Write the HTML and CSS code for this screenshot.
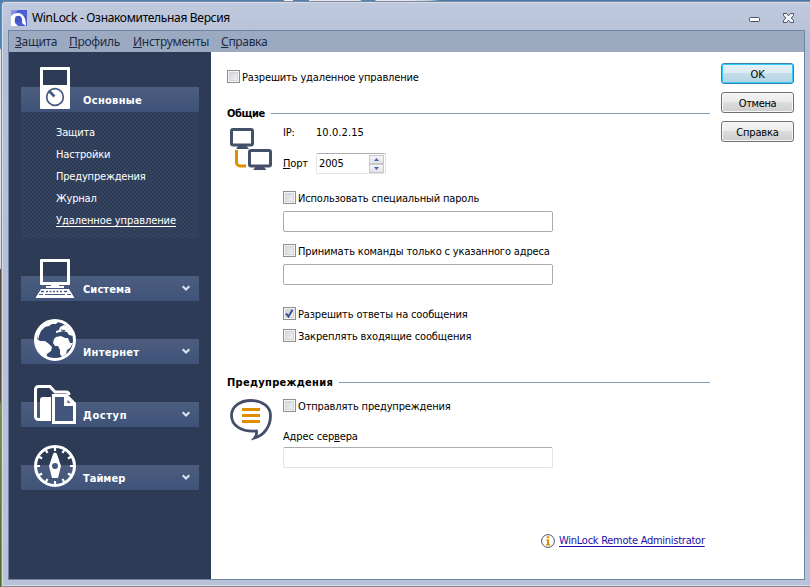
FILE: index.html
```html
<!DOCTYPE html>
<html lang="ru">
<head>
<meta charset="utf-8">
<title>WinLock</title>
<link rel="stylesheet" href="styles.css">
</head>
<body>
<div class="window">
  <header class="titlebar">
    <svg class="app-icon" width="16" height="16" viewBox="0 0 16 16">
      <rect width="16" height="16" fill="#4d5fd5"/>
      <path d="M0 0h7L0 7Z" fill="#8794e4"/>
      <path d="M0 6C2 4 4 3 7 3c5 0 8 5 8 13l-4-3c1-4-1-6-4-6-3 1-4 3-3 6l3 3H0Z" fill="#fff"/>
      <circle cx="7.300" cy="9" r="3.300" fill="#4256cb"/>
    </svg>
    <span class="caption">WinLock - Ознакомительная Версия</span>
    <svg class="win-btns" width="46" height="13" viewBox="0 0 46 13">
      <rect x=".5" y="6.500" width="10" height="4" rx="1" fill="#fff" stroke="#4a5163"/>
      <path d="M34.500 2.500h3l2 2.300 2-2.300h3v2L42.300 7l2.200 2.500v2h-3l-2-2.300-2 2.300h-3v-2L36.700 7l-2.200-2.500Z" fill="#f6f8fb" stroke="#4a5163"/>
    </svg>
  </header>
  <div class="client">
    <nav class="menu">
      <span class="m1"><u>З</u>ащита</span><span class="m2"><u>П</u>рофиль</span><span class="m3"><u>И</u>нструменты</span><span class="m4"><u>С</u>правка</span>
    </nav>
    <div class="body">
      <aside class="sidebar">
        <section class="group open">
          <h2 class="bar"><svg class="ico" style="top:-20px" width="42" height="42" viewBox="0 0 42 42">
            <path fill-rule="evenodd" d="M7 0h28a1 1 0 0 1 1 1v40a1 1 0 0 1-1 1H7a1 1 0 0 1-1-1V1a1 1 0 0 1 1-1ZM9 3v15h24V3Z" fill="#fff"/>
            <circle cx="21" cy="30" r="8.300" fill="none" stroke="#465a80" stroke-width="1.700"/><path d="m15 24 5.500 5.500" stroke="#465a80" stroke-width="2.600"/>
          </svg><span class="s1">Основные</span></h2>
          <ul class="items">
            <li>Защита</li><li>Настройки</li><li>Предупреждения</li><li>Журнал</li><li class="current">Удаленное управление</li>
          </ul>
        </section>
        <section class="group">
          <h2 class="bar"><svg class="ico" style="top:-17px" width="42" height="40" viewBox="0 0 42 40">
            <path fill-rule="evenodd" d="M7 0h28a1 1 0 0 1 1 1v24a1 1 0 0 1-1 1H7a1 1 0 0 1-1-1V1a1 1 0 0 1 1-1ZM9 3v20h24V3Z" fill="#fff"/>
            <path d="M17 25h8v2h5v2H12v-2h5ZM7 30h28l5.500 9h-39Z" fill="#fff"/>
            <path d="M7 32.500h3m2 0h2m1.500 0h2m1.500 0h2m1.500 0h2m1.500 0h2m2 0h3" stroke="#465a80" stroke-width="1.300"/><path d="M5 35.500h4m2 0h20m2 0h4" stroke="#465a80" stroke-width="1"/>
          </svg><span class="s2">Система</span><svg class="chev" width="8" height="7" viewBox="0 0 8 7"><path d="M.7 1.200 4 4.500l3.300-3.300" /></svg></h2>
        </section>
        <section class="group">
          <h2 class="bar"><svg class="ico" style="top:-20px" width="42" height="42" viewBox="0 0 42 42">
            <circle cx="21" cy="21" r="20" fill="#34476c"/>
            <circle cx="21" cy="21" r="19.500" fill="none" stroke="#fff" stroke-width="3"/>
            <path d="M3 16C5 8 10 3 17 2l7 1-2 2-4 0-3 2-4 1-4 4-2 5-1 4Z" fill="#fff"/>
            <path d="M3 20l3 2 5 0 4 3 3 3-1 4-4 3-1 4-5-3-4-8Z" fill="#fff"/>
            <path d="m22 12 3-1 1-3 4-2 3 1 4 5 2 5-4-1-2-3-4-1-3 1-4 1ZM20 20l2-2 5-1 4 2 3 0 2 5 3 0-3 5-3 2-1 4-4 3-2-3 0-4-2-4-3 0-2-3Z" fill="#fff"/>
            <path d="m27 11 4 .5" stroke="#34476c"/>
          </svg><span class="s3">Интернет</span><svg class="chev" width="8" height="7" viewBox="0 0 8 7"><path d="M.7 1.200 4 4.500l3.300-3.300" /></svg></h2>
        </section>
        <section class="group">
          <h2 class="bar"><svg class="ico" style="top:-17px" width="42" height="39" viewBox="0 0 42 39">
            <path d="M17 34.500H4.500a3 3 0 0 1-3-3v-27a3 3 0 0 1 3-3H16l5 5.500h11q3 0 3 3" fill="none" stroke="#fff" stroke-width="3"/>
            <path d="M9 12h8v24H5q1-1 1-4V15q0-3 3-3Z" fill="#fff"/>
            <path d="M17.500 8v30" stroke="#42567d"/>
            <path d="M19.500 10.500h13l8 8v19h-21ZM31.500 10v9.500H41" fill="#42567d" stroke="#fff" stroke-width="3"/><path d="M32 10v10h10Z" fill="#fff"/><path d="m33.500 15 3 3h-3Z" fill="#42567d"/>
          </svg><span class="s4">Доступ</span><svg class="chev" width="8" height="7" viewBox="0 0 8 7"><path d="M.7 1.200 4 4.500l3.300-3.300" /></svg></h2>
        </section>
        <section class="group">
          <h2 class="bar"><svg class="ico" style="top:-20px" width="42" height="42" viewBox="0 0 42 42">
            <circle cx="21" cy="21" r="19.500" fill="none" stroke="#fff" stroke-width="3"/>
            <path d="M21 2v4M21 36v4M2 21h4M36 21h4M11.500 4.500l2 3.500M28.500 34l2 3.500M4.500 11.500l3.500 2M34 28.500l3.500 2M30.500 4.500l-2 3.500M13.500 34l-2 3.500M37.500 11.500l-3.500 2M8 28.500l-3.500 2" stroke="#fff" stroke-width="2.200"/>
            <path d="M21 7.500q1.800 0 2.500 3L27 21l-3 12h-6l-3-12 3.500-10.500q.7-3 2.500-3Z" fill="#fff"/><circle cx="21" cy="21" r="3" fill="#465a80"/>
          </svg><span class="s5">Таймер</span><svg class="chev" width="8" height="7" viewBox="0 0 8 7"><path d="M.7 1.200 4 4.500l3.300-3.300" /></svg></h2>
        </section>
      </aside>
      <main class="form">
        <label class="check"><i class="box"></i><span>Разрешить удаленное управление</span></label>
        <div class="legend general"><span>Общие</span><i></i></div>
        <div class="section">
          <svg class="pic" width="44" height="44" viewBox="0 0 44 44">
            <path d="M7.500 23v12.500a3.500 3.500 0 0 0 3.500 3.500h6" fill="none" stroke="#e08e00" stroke-width="3"/>
            <rect x="2.500" y="2.500" width="21" height="15.500" rx="1.500" fill="#fff" stroke="#44506a" stroke-width="3"/><path d="M9.500 18.500h7.500l3 3.500H7Z" fill="#44506a"/>
            <rect x="20.500" y="23.500" width="21" height="15.500" rx="1.500" fill="#fff" stroke="#44506a" stroke-width="3"/><path d="M27 39.500h7.500l3 3.500H24Z" fill="#44506a"/>
          </svg>
          <div class="fields">
            <div class="row ip"><span class="name">IP:</span><span class="addr">10.0.2.15</span></div>
            <div class="row port"><span class="name"><u>П</u>орт</span>
              <div class="spin"><span>2005</span><div class="arrows">
                <i><svg width="5" height="3" viewBox="0 0 5 3"><path d="M0 3 2.500 0 5 3Z"/></svg></i><i><svg width="5" height="3" viewBox="0 0 5 3"><path d="M0 0h5L2.500 3Z"/></svg></i>
              </div></div>
            </div>
            <label class="check c1"><i class="box"></i><span>Использовать специальный пароль</span></label>
            <div class="input"></div>
            <label class="check c2"><i class="box"></i><span>Принимать команды только с указанного адреса</span></label>
            <div class="input"></div>
            <label class="check c3"><i class="box"><svg width="9" height="9" viewBox="0 0 9 9"><path d="m1 4.500 2.500 3L7.500.8" fill="none" stroke="#3d5492" stroke-width="2"/></svg></i><span>Разрешить ответы на сообщения</span></label>
            <label class="check c4"><i class="box"></i><span>Закреплять входящие сообщения</span></label>
          </div>
        </div>
        <div class="legend alerts"><span>Предупреждения</span><i></i></div>
        <div class="section second">
          <svg class="pic" width="44" height="44" viewBox="0 0 44 44">
            <path d="M22 2.500c11 0 19.500 6 19.500 15 0 11-6.500 20-16 22.500 2-2.500 2.500-4.500 2-7C12 34.500 2.500 27 2.500 17.500 2.500 8.500 11 2.500 22 2.500Z" fill="#fff" stroke="#44506a" stroke-width="2.800"/>
            <path d="M13 11.500h18M13 17.500h18M13 23.500h18" stroke="#e08e00" stroke-width="3"/>
          </svg>
          <div class="fields">
            <label class="check"><i class="box"></i><span>Отправлять предупреждения</span></label>
            <div class="server">Адрес сер<u>в</u>ера</div>
            <div class="input light"></div>
          </div>
        </div>
        <div class="linkrow">
          <svg width="14" height="14" viewBox="0 0 14 14"><circle cx="7" cy="7" r="6.400" fill="#fff" stroke="#44506a"/><path d="M5.800 2.300h2.400v2H5.800ZM5 5.500h3.200v4.700H9.300v1.300H5v-1.300h1V6.800H5Z" fill="#e08e00"/></svg>
          <a>WinLock Remote Administrator</a>
        </div>
      </main>
      <div class="buttons">
        <div class="btn ok">OK</div><div class="btn cancel">Отмена</div><div class="btn">Справка</div>
      </div>
    </div>
  </div>
</div>
</body>
</html>
```
FILE: styles.css
```css
* { box-sizing: border-box; }
html, body { margin: 0; height: 587px; overflow: hidden; }
body {
  padding: 1px 0 0 1px;
  background:
    linear-gradient(90deg, #4a82b3 0 284px, #f0f2f6 284px 293px, #4a82b3 293px 309px, #e6e8ef 309px 360px, #4a82b3 362px 375px, #e6e8ef 376px 410px, #c0cbe0 430px, #4279b0 440px) 0 0 / 810px 1px no-repeat,
    linear-gradient(#4a82b3 0 48px, #e4e4e8 50px 170px, #d8d9e0 268px, #5c4a40 270px 400px, #7c8d50 405px, #4f6b28 587px);
  font: 11px/14px "DejaVu Sans Condensed", "DejaVu Sans", sans-serif;
  font-stretch: condensed;
  letter-spacing: -.15px;
  color: #000;
}
u { text-decoration: underline; text-underline-offset: 1px; }
.window {
  width: 820px;
  height: 586px;
  border: 1px solid #7e8a9a;
  border-right: 0;
  border-radius: 4px 0 0 0;
  background: linear-gradient(#c0cadf, #b4bfd5 40px, #b8c3d9);
  box-shadow: inset 1px 1px 0 #d4dbe8, inset 0 -1px 0 #d4dbe8;
  padding-left: 6px;
}
.titlebar {
  width: 797px;
  height: 28px;
  display: flex;
  padding: 8px 10px 0 3px;
  font: 12px/16px "Noto Sans", sans-serif;
  letter-spacing: -.32px;
}
.app-icon { flex: none; margin-right: 5px; }
.win-btns { margin-left: auto; margin-top: 1px; }
.client { width: 797px; height: 550px; border: 1px solid #7283a0; background: #fff; }
.menu {
  display: flex;
  height: 21px;
  padding-left: 6px;
  background: #9baac1;
  font: 12px/21px "Noto Sans", sans-serif;
  letter-spacing: -.32px;
  color: #1d2a44;
}
.menu .m1 { width: 54px; }
.menu .m2 { width: 64px; }
.menu .m3 { width: 88px; letter-spacing: -.25px; }
.body { display: flex; height: 527px; }
.sidebar {
  width: 202px;
  flex: none;
  padding: 35px 12px 0;
  background: #2d3b57;
  color: #fff;
}
.group { height: 63px; }
.group.open { height: 189px; }
.bar {
  position: relative;
  display: flex;
  align-items: center;
  height: 25px;
  margin: 0;
  padding: 2px 9px 0 62px;
  background: linear-gradient(#4c5d7f, #3f5379);
  font: bold 11px/15px "DejaVu Sans Condensed", "DejaVu Sans", sans-serif;
  font-stretch: condensed;
  letter-spacing: .1px;
}
.bar .s1 { letter-spacing: .3px; }
.bar .s3 { letter-spacing: .3px; }
.bar .s4 { letter-spacing: .6px; }
.bar .s5 { letter-spacing: 0; }
.ico { position: absolute; left: 13px; }
.chev { margin: -2px 0 0 auto; }
.chev path { fill: none; stroke: #dfe5f0; stroke-width: 2; }
.items {
  margin: 0;
  padding: 10px 0 0 35px;
  height: 126px;
  list-style: none;
  line-height: 22px;
  letter-spacing: -.18px;
  background:
    radial-gradient(circle, #36455f .7px, transparent 1px) 0 0 / 4px 4px,
    radial-gradient(circle, #36455f .7px, transparent 1px) 2px 2px / 4px 4px;
}
.current { text-decoration: underline; text-underline-offset: 2px; letter-spacing: -.08px; }
.form { width: 483px; margin-left: 16px; padding-top: 18px; flex: none; }
.check { display: flex; height: 13px; line-height: 16px; white-space: nowrap; }
.box {
  width: 13px;
  height: 13px;
  margin-right: 2px;
  flex: none;
  border: 1px solid #8e8f8f;
  background: linear-gradient(135deg, #cdd1d6, #f6f6f7);
  box-shadow: inset 0 0 0 1px #f4f4f4, inset 0 0 0 2px #d3d6da;
}
.box svg { display: block; margin: 1px; }
.legend { display: flex; height: 14px; font-weight: bold; }
.legend i { flex: 1; height: 1px; margin: 6px 0 0 6px; background: #7c9db5; }
.general { margin-top: 24px; letter-spacing: -.4px; }
.alerts { margin-top: 34px; letter-spacing: .3px; }
.section { display: flex; margin-top: 5px; }
.pic { flex: none; margin: 1px 10px 0 2px; }
.fields { width: 270px; }
.row { display: flex; align-items: center; }
.ip { height: 14px; margin-bottom: 13px; }
.name { width: 33px; }
.addr { letter-spacing: .08px; }
.spin {
  display: flex;
  width: 70px;
  height: 21px;
  padding: 2px 2px 1px 2px;
  border: 1px solid #e3e3ea;
  border-top-color: #abadb3;
  border-radius: 2px;
  line-height: 16px;
}
.arrows { margin-left: auto; }
.arrows i {
  display: flex;
  align-items: center;
  justify-content: center;
  width: 13px;
  height: 7px;
  margin-bottom: 2px;
  background: linear-gradient(#f6f6f6, #e2e2e2);
  box-shadow: 0 0 0 1px #c6c8cc;
}
.arrows path { fill: #4a62ad; }
.c1 { margin-top: 17px; }
.c2 { margin-top: 12px; }
.c3 { margin-top: 22px; }
.c4 { margin-top: 9px; }
.input { height: 21px; margin-top: 7px; border: 1px solid #ababab; border-radius: 2px; }
.input.light { margin-top: 3px; border-color: #abadb3 #e3e3ea #e3e3ea; }
.second { margin-top: 9px; }
.second .pic { margin-top: -1px; }
.server { margin-top: 18px; }
.linkrow { display: flex; margin: 66px 0 0 314px; }
.linkrow svg { margin-right: 4px; }
.linkrow a { color: #1a0dab; text-decoration: underline; text-underline-offset: 2px; letter-spacing: -.26px; white-space: nowrap; }
.buttons { display: flex; flex-direction: column; gap: 8px; margin-left: 11px; padding-top: 11px; }
.btn {
  width: 73px;
  height: 21px;
  border: 1px solid #707070;
  border-radius: 3px;
  background: linear-gradient(#f3f3f3, #ebebeb 50%, #dcdcdc 50%, #cecece);
  box-shadow: inset 0 0 0 1px #f8f8f8;
  text-align: center;
  line-height: 22px;
}
.btn.ok { border-color: #3c7fb1; box-shadow: inset 0 0 0 1px #2ccdfb; background: linear-gradient(#e6f0f6, #dceaf3 50%, #c5dde9 50%, #b4d3e3); }
.btn.cancel { letter-spacing: -.35px; }
```
